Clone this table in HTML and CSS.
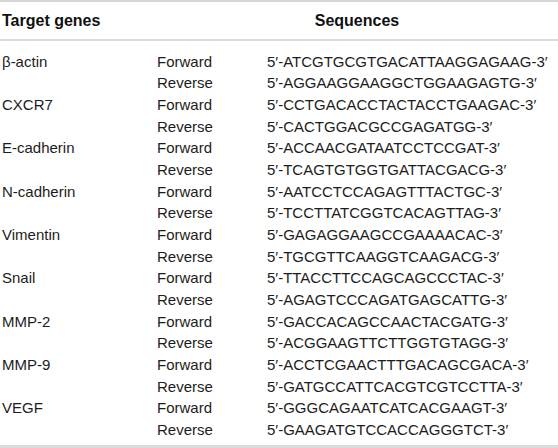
FILE: index.html
```html
<!DOCTYPE html>
<html>
<head>
<meta charset="utf-8">
<link rel="stylesheet" href="styles.css">
</head>
<body>
<div class="tbl">
  <div class="row head">
    <div class="c1">Target genes</div>
    <div class="seqh">Sequences</div>
  </div>
  <div class="body">
    <div class="row"><div>β-actin</div><div>Forward</div><div>5′-ATCGTGCGTGACATTAAGGAGAAG-3′</div></div>
    <div class="row"><div></div><div>Reverse</div><div>5′-AGGAAGGAAGGCTGGAAGAGTG-3′</div></div>
    <div class="row"><div>CXCR7</div><div>Forward</div><div>5′-CCTGACACCTACTACCTGAAGAC-3′</div></div>
    <div class="row"><div></div><div>Reverse</div><div>5′-CACTGGACGCCGAGATGG-3′</div></div>
    <div class="row"><div>E-cadherin</div><div>Forward</div><div>5′-ACCAACGATAATCCTCCGAT-3′</div></div>
    <div class="row"><div></div><div>Reverse</div><div>5′-TCAGTGTGGTGATTACGACG-3′</div></div>
    <div class="row"><div>N-cadherin</div><div>Forward</div><div>5′-AATCCTCCAGAGTTTACTGC-3′</div></div>
    <div class="row"><div></div><div>Reverse</div><div>5′-TCCTTATCGGTCACAGTTAG-3′</div></div>
    <div class="row"><div>Vimentin</div><div>Forward</div><div>5′-GAGAGGAAGCCGAAAACAC-3′</div></div>
    <div class="row"><div></div><div>Reverse</div><div>5′-TGCGTTCAAGGTCAAGACG-3′</div></div>
    <div class="row"><div>Snail</div><div>Forward</div><div>5′-TTACCTTCCAGCAGCCCTAC-3′</div></div>
    <div class="row"><div></div><div>Reverse</div><div>5′-AGAGTCCCAGATGAGCATTG-3′</div></div>
    <div class="row"><div>MMP-2</div><div>Forward</div><div>5′-GACCACAGCCAACTACGATG-3′</div></div>
    <div class="row"><div></div><div>Reverse</div><div>5′-ACGGAAGTTCTTGGTGTAGG-3′</div></div>
    <div class="row"><div>MMP-9</div><div>Forward</div><div>5′-ACCTCGAACTTTGACAGCGACA-3′</div></div>
    <div class="row"><div></div><div>Reverse</div><div>5′-GATGCCATTCACGTCGTCCTTA-3′</div></div>
    <div class="row"><div>VEGF</div><div>Forward</div><div>5′-GGGCAGAATCATCACGAAGT-3′</div></div>
    <div class="row"><div></div><div>Reverse</div><div>5′-GAAGATGTCCACCAGGGTCT-3′</div></div>
  </div>
</div>
</body>
</html>
```
FILE: styles.css
```css
html, body {
  margin: 0;
  padding: 0;
  background: #fff;
}
body {
  font-family: "Liberation Sans", Arial, sans-serif;
  color: #1c1c1c;
  width: 558px;
  height: 448px;
  overflow: hidden;
}
.tbl {
  border-top: 2px solid #d6d6d6;
  border-bottom: 3px solid #dcdcdc;
}
.row {
  display: grid;
  grid-template-columns: 155px 110px 1fr;
  padding: 0 1px 0 2px;
  font-size: 15px;
  height: 21.67px;
  line-height: 21.67px;
  white-space: nowrap;
}
.head {
  height: 20px;
  line-height: 20px;
  font-size: 16px;
  font-weight: bold;
  padding-top: 9px;
  padding-bottom: 8px;
  border-bottom: 2px solid #dadada;
  color: #111;
}
.seqh {
  grid-column: 2 / 4;
  text-align: center;
}
.body {
  padding-top: 9.7px;
  padding-bottom: 4.3px;
}
```
